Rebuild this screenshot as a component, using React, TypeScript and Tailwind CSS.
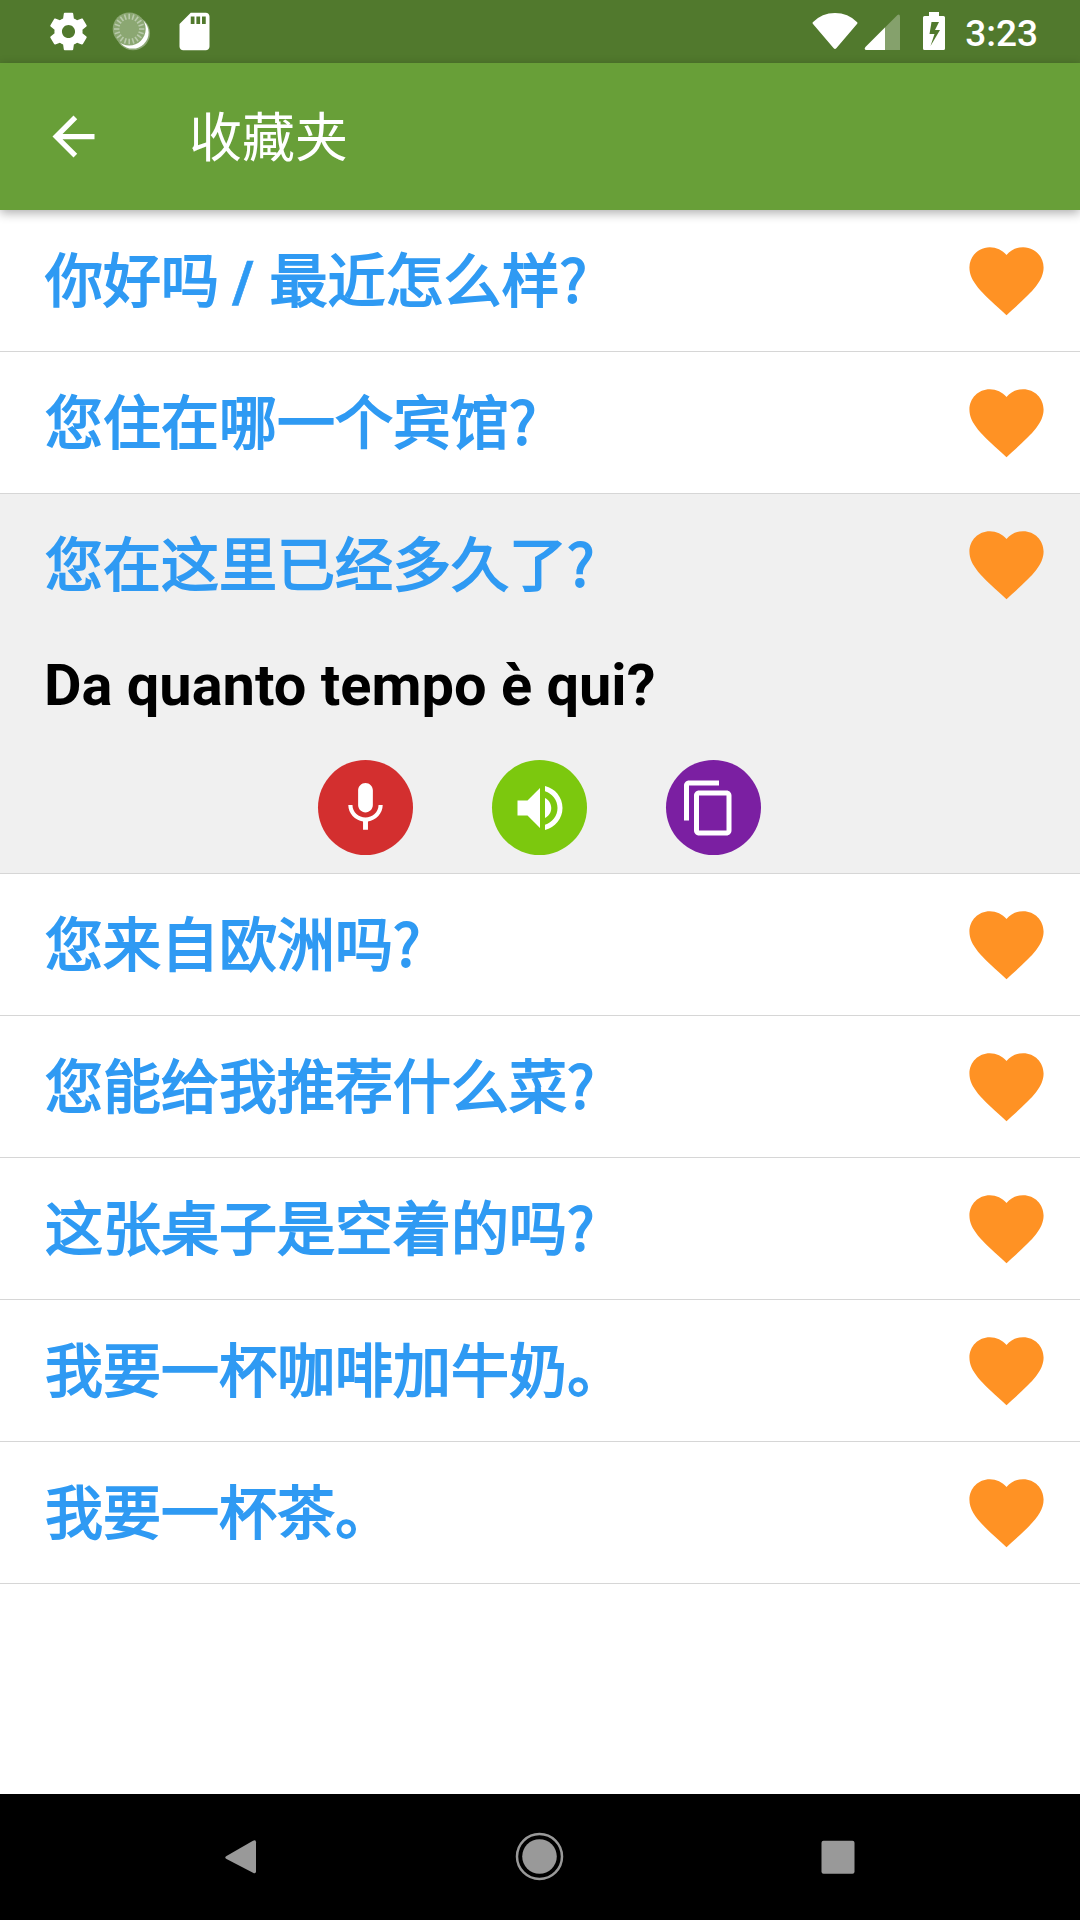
const phrases = [
  { text: "你好吗 / 最近怎么样?" },
  { text: "您住在哪一个宾馆?" },
  { text: "您在这里已经多久了?", translation: "Da quanto tempo è qui?" },
  { text: "您来自欧洲吗?" },
  { text: "您能给我推荐什么菜?" },
  { text: "这张桌子是空着的吗?" },
  { text: "我要一杯咖啡加牛奶。" },
  { text: "我要一杯茶。" },
];

const ticks = Array.from({ length: 20 }, (_, i) => i * 18);

function StatusBar() {
  return (
    <div className="flex h-[63px] shrink-0 items-center justify-between bg-[#51792d] pl-[46px] pr-[42px] text-white">
      <div className="flex items-center gap-[18px]">
        <svg viewBox="0 0 24 24" className="size-[45px]" fill="currentColor">
          <path d="M19.43 12.98c.04-.32.07-.64.07-.98s-.03-.66-.07-.98l2.11-1.65c.19-.15.24-.42.12-.64l-2-3.46c-.12-.22-.39-.3-.61-.22l-2.49 1c-.52-.4-1.08-.73-1.69-.98l-.38-2.65C14.46 2.18 14.25 2 14 2h-4c-.25 0-.46.18-.49.42l-.38 2.65c-.61.25-1.17.59-1.69.98l-2.49-1c-.23-.09-.49 0-.61.22l-2 3.46c-.13.22-.07.49.12.64l2.11 1.65c-.04.32-.07.65-.07.98s.03.66.07.98l-2.11 1.65c-.19.15-.24.42-.12.64l2 3.46c.12.22.39.3.61.22l2.49-1c.52.4 1.08.73 1.69.98l.38 2.65c.03.24.24.42.49.42h4c.25 0 .46-.18.49-.42l.38-2.65c.61-.25 1.17-.59 1.69-.98l2.49 1c.23.09.49 0 .61-.22l2-3.46c.12-.22.07-.49-.12-.64l-2.11-1.65zM12 15.5c-1.93 0-3.5-1.57-3.5-3.5s1.57-3.5 3.5-3.5 3.5 1.57 3.5 3.5-1.57 3.5-3.5 3.5z" />
        </svg>
        <svg viewBox="0 0 45 45" className="size-[45px]">
          <circle cx="24" cy="24.2" r="17" fill="#fff" opacity="0.35" />
          <circle cx="23.6" cy="23.6" r="16" fill="#fff" />
          <circle cx="20.2" cy="20" r="16.5" fill="#8ba772" />
          {ticks.map((deg) => (
            <path key={deg} d="M20.2 4.8v5.4" stroke="#b9caab" strokeWidth="1.6" transform={`rotate(${deg} 20.2 20)`} />
          ))}
        </svg>
        <svg viewBox="0 0 24 24" className="size-[45px]" fill="currentColor">
          <path d="M18 2h-8L4.02 8 4 20c0 1.1.9 2 2 2h12c1.1 0 2-.9 2-2V4c0-1.1-.9-2-2-2zm-6 6h-2V4h2v4zm3 0h-2V4h2v4zm3 0h-2V4h2v4z" />
        </svg>
      </div>
      <div className="flex items-center">
        <svg viewBox="0 0 134 45" className="h-[45px] w-[134px]" fill="currentColor">
          <path d="M.8 13.2Q10 4 23 4t22.2 9.2q.6.8 0 1.6L24.3 39.2q-1.3 1.6-2.6 0L.8 14.8q-.6-.8 0-1.6z" />
          <path d="M88 8v33H54.5q-3-.5-1-3L85.5 6q2.5-1.5 2.5 2z" opacity="0.3" />
          <path d="M73 18.5V41H54.5q-3-.5-1-3z" />
          <path fillRule="evenodd" d="M117 3h10v4h4.5q1.5 0 1.5 1.5v31q0 1.5-1.5 1.5h-19q-1.5 0-1.5-1.5v-31q0-1.5 1.5-1.5h4.5zM119.5 13l-2 12h5l-4 12 9.5-16h-5l4-8z" />
        </svg>
        <span className="ml-[19px] pt-[3px] font-['Roboto'] text-[37px] font-medium leading-none">3:23</span>
      </div>
    </div>
  );
}

function AppBar() {
  return (
    <header className="relative z-10 flex h-[147px] shrink-0 items-center bg-[#689f38] pl-[42px] text-white shadow-[0_3px_10px_rgba(0,0,0,0.32)]">
      <svg viewBox="0 0 24 24" className="size-[63px]" fill="currentColor">
        <path d="M20 11H7.83l5.59-5.59L12 4l-8 8 8 8 1.41-1.41L7.83 13H20v-2z" />
      </svg>
      <h1 className="ml-[84px] pb-[5px] text-[53px] font-normal leading-none">收藏夹</h1>
    </header>
  );
}

// The slash between alternatives is set in Roboto, the rest in the CJK face
function PhraseText({ text }: { text: string }) {
  const [first, second] = text.split(" / ");
  return (
    <span className="pb-[7px] text-[58px] font-normal leading-none whitespace-pre text-[#2f9af3] [-webkit-text-stroke:1.8px_#2f9af3]">
      {first}
      {second && (
        <>
          <span className="-ml-px mr-px font-['Roboto'] font-bold leading-[0] [-webkit-text-stroke:0.6px_#2f9af3]">{" / "}</span>
          {second}
        </>
      )}
    </span>
  );
}

function Heart() {
  return (
    <svg viewBox="0 0 24 24" className="size-[89px] shrink-0" fill="#ff9224">
      <path d="M12 21.35l-1.45-1.32C5.4 15.36 2 12.28 2 8.5 2 5.42 4.42 3 7.5 3c1.74 0 3.41.81 4.5 2.09C13.09 3.81 14.76 3 16.5 3 19.58 3 22 5.42 22 8.5c0 3.78-3.4 6.86-8.55 11.54L12 21.35z" />
    </svg>
  );
}

function Actions() {
  return (
    <div className="flex justify-center gap-[79px] pr-px">
      <button className="flex size-[95px] items-center justify-center rounded-full bg-[#d32f2f]">
        <svg viewBox="0 0 24 24" className="size-[59px]" fill="#fff">
          <path d="M12 14c1.66 0 2.99-1.34 2.99-3L15 5c0-1.66-1.34-3-3-3S9 3.34 9 5v6c0 1.66 1.34 3 3 3zm5.3-3c0 3-2.54 5.1-5.3 5.1S6.7 14 6.7 11H5c0 3.41 2.72 6.23 6 6.72V21h2v-3.28c3.28-.48 6-3.3 6-6.72h-1.7z" />
        </svg>
      </button>
      <button className="flex size-[95px] items-center justify-center rounded-full bg-[#7cc80e]">
        <svg viewBox="0 0 24 24" className="size-[60px]" fill="#fff">
          <path d="M3 9v6h4l5 5V4L7 9H3zm13.5 3c0-1.77-1.02-3.29-2.5-4.03v8.05c1.48-.73 2.5-2.25 2.5-4.02zM14 3.23v2.06c2.89.86 5 3.54 5 6.71s-2.11 5.85-5 6.71v2.06c4.01-.91 7-4.49 7-8.77s-2.99-7.86-7-8.77z" />
        </svg>
      </button>
      <button className="flex size-[95px] items-center justify-center rounded-full bg-[#7b1fa2] pr-[9px]">
        <svg viewBox="0 0 24 24" className="size-[60px]" fill="#fff">
          <path d="M16 1H4c-1.1 0-2 .9-2 2v14h2V3h12V1zm3 4H8c-1.1 0-2 .9-2 2v14c0 1.1.9 2 2 2h11c1.1 0 2-.9 2-2V7c0-1.1-.9-2-2-2zm0 16H8V7h11v14z" />
        </svg>
      </button>
    </div>
  );
}

function NavBar() {
  return (
    <nav className="flex h-[126px] shrink-0 items-center justify-between bg-black px-[210px]">
      <svg viewBox="0 0 63 63" className="size-[63px]" fill="#999">
        <path d="M16.5 30L43 14.7q3-1.5 3 1.5v29q0 3-3 1.5L16.5 33q-2.5-1.5 0-3z" />
      </svg>
      <svg viewBox="0 0 63 63" className="size-[63px]">
        <circle cx="30.5" cy="30.5" r="17.3" fill="#999" />
        <circle cx="30.5" cy="30.5" r="22.5" fill="none" stroke="#999" strokeWidth="2.5" />
      </svg>
      <svg viewBox="0 0 63 63" className="size-[63px]" fill="#999">
        <rect x="14.5" y="14.7" width="33" height="33" rx="2" />
      </svg>
    </nav>
  );
}

export default function App() {
  return (
    <div className="flex h-[1920px] w-[1080px] flex-col overflow-hidden bg-white font-['Noto_Sans_CJK_SC',sans-serif]">
      <StatusBar />
      <AppBar />
      <ul className="flex-1">
        {phrases.map((phrase) => (
          <li
            key={phrase.text}
            className={phrase.translation ? "h-[380px] border-b border-[#d6d6d6] bg-[#f0f0f0]" : "h-[142px] border-b border-[#d6d6d6]"}
          >
            <div className="flex h-[141px] items-center justify-between pl-[45px] pr-[29px]">
              <PhraseText text={phrase.text} />
              <Heart />
            </div>
            {phrase.translation && (
              <>
                <p className="flex h-[125px] items-start pl-[44px] pt-[16px] font-['Roboto'] text-[57.75px] font-bold leading-[68px] text-black">
                  {phrase.translation}
                </p>
                <Actions />
              </>
            )}
          </li>
        ))}
      </ul>
      <NavBar />
    </div>
  );
}
